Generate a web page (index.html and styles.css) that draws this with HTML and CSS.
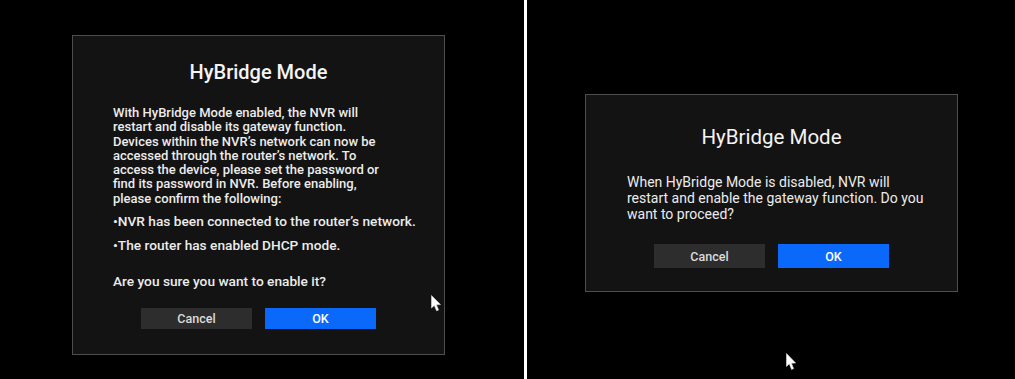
FILE: index.html
```html
<!DOCTYPE html>
<html lang="en">
<head>
<meta charset="utf-8">
<title>HyBridge Mode</title>
<link rel="stylesheet" href="styles.css">
</head>
<body>
<div class="screen">
  <section class="panel panel-left">
    <div class="dialog dialog-enable">
      <h2 class="title">HyBridge Mode</h2>
      <p class="body-text">With HyBridge Mode enabled, the NVR will<br>restart and disable its gateway function.<br>Devices within the NVR’s network can now be<br>accessed through the router’s network. To<br>access the device, please set the password or<br>find its password in NVR. Before enabling,<br>please confirm the following:</p>
      <p class="bullet bullet-1">•NVR has been connected to the router’s network.</p>
      <p class="bullet bullet-2">•The router has enabled DHCP mode.</p>
      <p class="question">Are you sure you want to enable it?</p>
      <div class="actions">
        <button class="btn btn-cancel">Cancel</button>
        <button class="btn btn-ok">OK</button>
      </div>
    </div>
    <svg class="cursor cursor-left" width="11" height="17" viewBox="0 0 11 17"><path d="M0.5 0.5 L0.5 13 L3.3 10.4 L5.6 15.8 L7.6 15 L5.4 9.8 L9.5 9.6 Z" fill="#fff" stroke="#ddd" stroke-width="0.6"/></svg>
  </section>
  <div class="divider"></div>
  <section class="panel panel-right">
    <div class="dialog dialog-disable">
      <h2 class="title">HyBridge Mode</h2>
      <p class="body-text">When HyBridge Mode is disabled, NVR will<br>restart and enable the gateway function. Do you<br>want to proceed?</p>
      <div class="actions">
        <button class="btn btn-cancel">Cancel</button>
        <button class="btn btn-ok">OK</button>
      </div>
    </div>
    <svg class="cursor cursor-right" width="11" height="18" viewBox="0 0 11 18"><path d="M0.5 0.5 L0.5 13.5 L3.3 10.8 L5.6 16.4 L7.6 15.6 L5.4 10.2 L9.6 10 Z" fill="#fff" stroke="#ddd" stroke-width="0.6"/></svg>
  </section>
</div>
</body>
</html>
```
FILE: styles.css
```css
* { box-sizing: border-box; }
html, body { margin: 0; padding: 0; background: #000; }
body {
  width: 1015px;
  height: 379px;
  overflow: hidden;
  font-family: Roboto, "Liberation Sans", Arial, sans-serif;
  color: #f2f2f2;
}
.screen {
  display: flex;
  width: 1015px;
  height: 379px;
}
.panel {
  position: relative;
  background: #000;
  height: 100%;
}
.panel-left {
  width: 524px;
  padding: 35px 0 0 72px;
}
.divider {
  width: 3px;
  background: #fff;
  height: 100%;
}
.panel-right {
  flex: 1;
  padding: 94px 0 0 58px;
}
.dialog {
  width: 373px;
  background: #131313;
  border: 1px solid #4e4e4e;
  display: flex;
  flex-direction: column;
}
.dialog-enable {
  height: 320px;
  padding: 24px 20px 0 40px;
}
.dialog-disable {
  height: 198px;
  padding: 30px 20px 0 41px;
}
.title {
  margin: 0;
  font-size: 20px;
  line-height: 24px;
  font-weight: 500;
  text-align: center;
  color: #f4f4f4;
  padding-right: 20px;
}
.dialog-disable .title {
  font-weight: 400;
  font-size: 20.5px;
  padding-right: 21px;
}
.dialog-enable .body-text,
.dialog-enable .bullet,
.dialog-enable .question {
  margin: 0;
  font-size: 13px;
  line-height: 14.3px;
  font-weight: 500;
  color: #ececec;
  white-space: nowrap;
}
.dialog-enable .bullet,
.dialog-enable .question {
  font-size: 13.7px;
}
.dialog-enable .body-text { margin-top: 22px; }
.dialog-enable .bullet-1 { margin-top: 7.7px; }
.dialog-enable .bullet-2 { margin-top: 9.7px; }
.dialog-enable .question { margin-top: 21.7px; }
.dialog-disable .body-text {
  margin: 25px 0 0 0;
  font-size: 14px;
  line-height: 16px;
  color: #ececec;
  white-space: nowrap;
}
.actions {
  display: flex;
  gap: 13px;
  justify-content: center;
  padding-right: 20px;
}
.dialog-enable .actions { margin-top: 20px; }
.dialog-disable .actions { margin-top: 22px; padding-right: 21px; }
.btn {
  width: 111px;
  border: none;
  margin: 0;
  padding: 0;
  font-family: Roboto, "Liberation Sans", Arial, sans-serif;
  font-size: 12.5px;
  font-weight: 500;
  cursor: default;
}
.dialog-enable .btn { height: 21px; }
.dialog-disable .btn { height: 24px; }
.btn-cancel { background: #2d2d2d; color: #dcdcdc; }
.btn-ok { background: #0a68fb; color: #fff; }
.cursor { position: absolute; }
.cursor-left { left: 431px; top: 295px; }
.cursor-right { left: 259px; top: 353px; }
```
